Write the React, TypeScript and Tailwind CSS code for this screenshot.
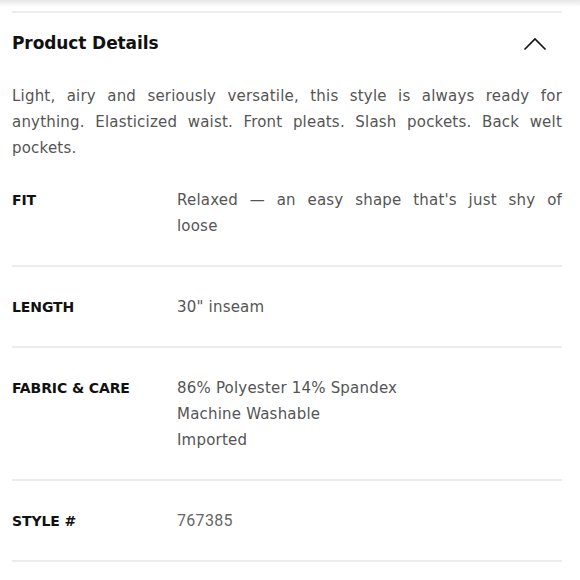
const rows: { label: string; values: string[]; mono?: boolean; wide?: boolean }[] = [
  { label: 'FIT', values: ["Relaxed — an easy shape that's just shy of loose"], wide: true },
  { label: 'LENGTH', values: ['30" inseam'] },
  { label: 'FABRIC & CARE', values: ['86% Polyester 14% Spandex', 'Machine Washable', 'Imported'] },
  { label: 'STYLE #', values: ['767385'], mono: true },
];

const ChevronUp = () => (
  <svg width="24" height="14" viewBox="0 0 24 14" fill="none">
    <path d="M1.5 12.5 L12 2 L22.5 12.5" stroke="#111" strokeWidth="1.6" />
  </svg>
);

export default function App() {
  return (
    <div className="w-[580px] h-[580px] bg-white overflow-hidden font-['DejaVu_Sans',sans-serif]">
      <div className="h-[7px] bg-gradient-to-b from-[#e6e6e6] to-white" />
      <div className="ml-3 mr-[18px] mt-[4px] h-[2px] bg-[#ececec]" />

      <div className="flex items-center justify-between pl-3 pr-[33px] pt-[18px] pb-[15px]">
        <h2 className="text-[17px] font-semibold text-[#111] tracking-[-0.1px]">Product Details</h2>
        <ChevronUp />
      </div>

      <p className="pl-3 pr-[18px] pt-[11px] text-[15px] leading-[26px] text-[#555] text-justify tracking-[0.2px]">
        Light, airy and seriously versatile, this style is always ready for anything. Elasticized
        waist. Front pleats. Slash pockets. Back welt pockets.
      </p>

      <div className="mt-[26px]">
        {rows.map((row, i) => (
          <div key={row.label}>
            <div className={`flex pl-3 pr-[18px] pb-[26px] ${i === 0 ? '' : 'pt-[27px]'}`}>
              <div className="w-[165px] shrink-0 text-[14px] font-bold text-[#111] leading-[26px] tracking-[-0.1px]">
                {row.label}
              </div>
              <div
                className={`flex-1 leading-[26px] text-justify ${row.wide ? '[word-spacing:2px]' : ''} ${
                  row.mono
                    ? "font-['Roboto',sans-serif] text-[16px] tracking-[0.3px] text-[#666]"
                    : 'text-[15px] tracking-[0.2px] text-[#555]'
                }`}
              >
                {row.values.map((v) => (
                  <div key={v}>{v}</div>
                ))}
              </div>
            </div>
            <div className="ml-3 mr-[18px] h-[2px] bg-[#ececec]" />
          </div>
        ))}
      </div>
    </div>
  );
}
